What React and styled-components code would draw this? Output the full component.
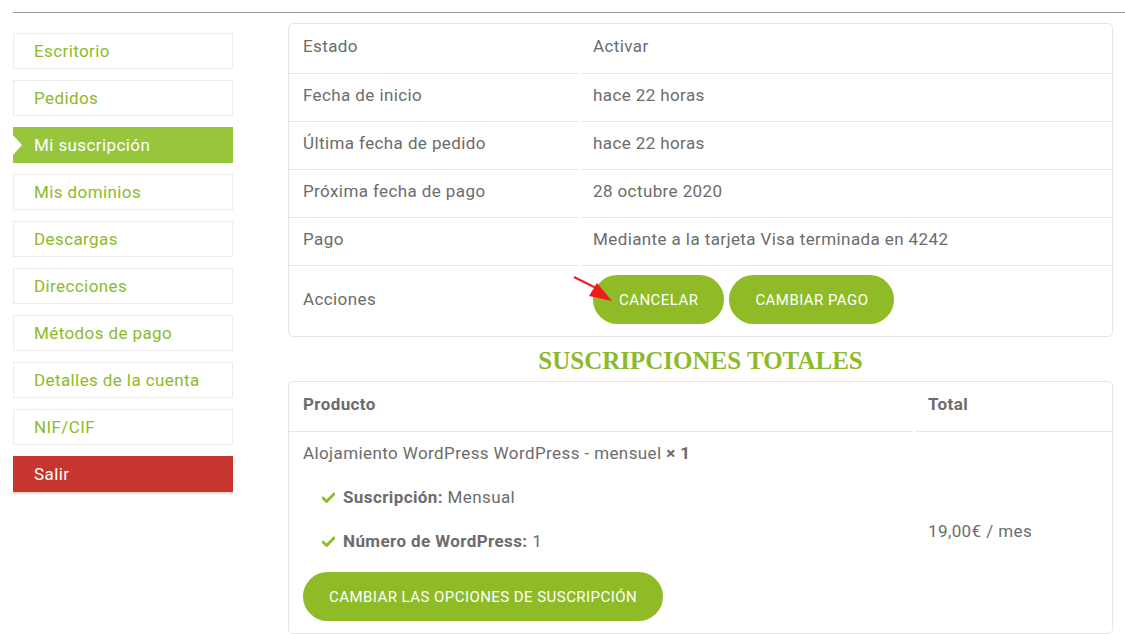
import React from "react";
import styled, { createGlobalStyle } from "styled-components";

const GREEN = "#8fbb27";
const GREEN_TEXT = "#8dba2a";
const TEXT = "#6c6c6c";
const LINE = "#e6e6e6";

const Global = createGlobalStyle`
  html, body { margin: 0; padding: 0; background: #fff; }
  body { font-family: Roboto, "Liberation Sans", sans-serif; color: ${TEXT}; letter-spacing: 0.4px; }
  * { box-sizing: border-box; }
`;

const Page = styled.div`
  padding: 12px 0 0 13px;
  width: 1125px;
  height: 634px;
  overflow: hidden;
`;

const TopRule = styled.div`
  height: 1px;
  background: #9b9b9b;
`;

const Layout = styled.div`
  display: flex;
  align-items: flex-start;
  gap: 55px;
`;

const Sidebar = styled.nav`
  width: 220px;
  margin-top: 20px;
  display: flex;
  flex-direction: column;
  gap: 11px;
`;

const NavItem = styled.div`
  position: relative;
  height: 36px;
  display: flex;
  align-items: center;
  padding-left: 20px;
  font-size: 17px;
  border: 1px solid ${(p) => (p.$variant === "active" ? "#97c53c" : p.$variant === "danger" ? "#c6362f" : "#ececec")};
  background: ${(p) => (p.$variant === "active" ? "#97c53c" : p.$variant === "danger" ? "#c6362f" : "#fff")};
  color: ${(p) => (p.$variant ? "#fff" : GREEN_TEXT)};
  box-shadow: ${(p) => (p.$variant === "danger" ? "0 2px 0 #f3dcd8" : "none")};
  &::before {
    content: "";
    display: ${(p) => (p.$variant === "active" ? "block" : "none")};
    position: absolute;
    left: -1px;
    top: 7px;
    border-top: 10px solid transparent;
    border-bottom: 10px solid transparent;
    border-left: 9px solid #fff;
  }
`;

const Main = styled.main`
  position: relative;
  width: 825px;
  margin-top: 10px;
`;

const Box = styled.div`
  border: 1px solid ${LINE};
  border-radius: 5px;
  display: grid;
  grid-template-columns: ${(p) => p.$cols};
  column-gap: 3px;
  overflow: hidden;
`;

const Cell = styled.div`
  display: flex;
  align-items: center;
  min-height: ${(p) => p.$h || 48}px;
  padding-left: ${(p) => p.$pl || 14}px;
  padding-bottom: 5px;
  font-size: 17px;
  font-weight: ${(p) => (p.$bold ? 700 : 400)};
  color: ${TEXT};
  border-bottom: ${(p) => (p.$last ? "none" : `1px solid ${LINE}`)};
`;

const ActionCell = styled(Cell)`
  gap: 5px;
  padding-top: 9px;
  padding-bottom: 12px;
`;

const PillButton = styled.button`
  height: 49px;
  padding: 0 26px;
  border: none;
  border-radius: 25px;
  background: ${GREEN};
  color: #fff;
  font-family: Roboto, "Liberation Sans", sans-serif;
  font-size: 15px;
  letter-spacing: 0.45px;
  cursor: pointer;
  white-space: nowrap;
`;

const Heading = styled.h2`
  margin: 0;
  height: 44px;
  padding-top: 4px;
  display: flex;
  align-items: center;
  justify-content: center;
  font-family: "Liberation Serif", "Times New Roman", serif;
  font-weight: 700;
  font-size: 25px;
  letter-spacing: 0;
  color: ${GREEN_TEXT};
`;

const ProductCell = styled.div`
  padding: 9px 0 12px 14px;
  font-size: 17px;
  color: ${TEXT};
  line-height: 24px;
`;

const Meta = styled.ul`
  list-style: none;
  margin: 0;
  padding: 0 0 0 19px;
`;

const MetaItem = styled.li`
  margin-top: 20px;
  display: flex;
  align-items: center;
  gap: 8px;
  b { font-weight: 700; }
`;

const Check = styled.svg`
  width: 13px;
  height: 11px;
  flex: none;
`;

const CtaRow = styled.div`
  margin-top: 19px;
`;

const TotalCell = styled.div`
  display: flex;
  align-items: center;
  padding-left: 12px;
  padding-bottom: 4px;
  font-size: 17px;
  color: ${TEXT};
`;

const Arrow = styled.svg`
  position: absolute;
  left: 284px;
  top: 252px;
  width: 60px;
  height: 40px;
  overflow: visible;
  pointer-events: none;
`;

const CheckIcon = () => (
  <Check viewBox="0 0 13 11">
    <path d="M1 6 L4.6 9.6 L12 2" fill="none" stroke="#8fbb27" strokeWidth="2.8" strokeLinecap="round" strokeLinejoin="round" />
  </Check>
);

const nav = [
  ["Escritorio"],
  ["Pedidos"],
  ["Mi suscripción", "active"],
  ["Mis dominios"],
  ["Descargas"],
  ["Direcciones"],
  ["Métodos de pago"],
  ["Detalles de la cuenta"],
  ["NIF/CIF"],
  ["Salir", "danger"],
];

const rows = [
  ["Estado", "Activar"],
  ["Fecha de inicio", "hace 22 horas"],
  ["Última fecha de pedido", "hace 22 horas"],
  ["Próxima fecha de pago", "28 octubre 2020"],
  ["Pago", "Mediante a la tarjeta Visa terminada en 4242"],
];

export default function App() {
  return (
    <>
      <Global />
      <Page>
        <TopRule />
        <Layout>
          <Sidebar>
            {nav.map(([label, v]) => (
              <NavItem key={label} $variant={v}>
                {label}
              </NavItem>
            ))}
          </Sidebar>
          <Main>
            <Box $cols="289px 1fr">
              {rows.map(([k, v], i) => (
                <React.Fragment key={k}>
                  <Cell $h={i === 0 ? 50 : 48}>{k}</Cell>
                  <Cell $h={i === 0 ? 50 : 48} $pl={12}>{v}</Cell>
                </React.Fragment>
              ))}
              <Cell $h={70} $last>Acciones</Cell>
              <ActionCell $h={70} $pl={12} $last>
                <PillButton>CANCELAR</PillButton>
                <PillButton>CAMBIAR PAGO</PillButton>
              </ActionCell>
            </Box>
            <Heading>SUSCRIPCIONES TOTALES</Heading>
            <Box $cols="624px 1fr">
              <Cell $h={50} $bold>Producto</Cell>
              <Cell $h={50} $pl={12} $bold>Total</Cell>
              <ProductCell>
                <div>
                  Alojamiento WordPress WordPress - mensuel <b>× 1</b>
                </div>
                <Meta>
                  <MetaItem>
                    <CheckIcon />
                    <span><b>Suscripción:</b> Mensual</span>
                  </MetaItem>
                  <MetaItem>
                    <CheckIcon />
                    <span><b>Número de WordPress:</b> 1</span>
                  </MetaItem>
                </Meta>
                <CtaRow>
                  <PillButton>CAMBIAR LAS OPCIONES DE SUSCRIPCIÓN</PillButton>
                </CtaRow>
              </ProductCell>
              <TotalCell>19,00€ / mes</TotalCell>
            </Box>
            <Arrow viewBox="0 0 60 40">
              <line x1="2" y1="2" x2="24" y2="13" stroke="#f21b1b" strokeWidth="2" />
              <polygon points="40,26 17,21 25,8" fill="#f21b1b" />
            </Arrow>
          </Main>
        </Layout>
      </Page>
    </>
  );
}
